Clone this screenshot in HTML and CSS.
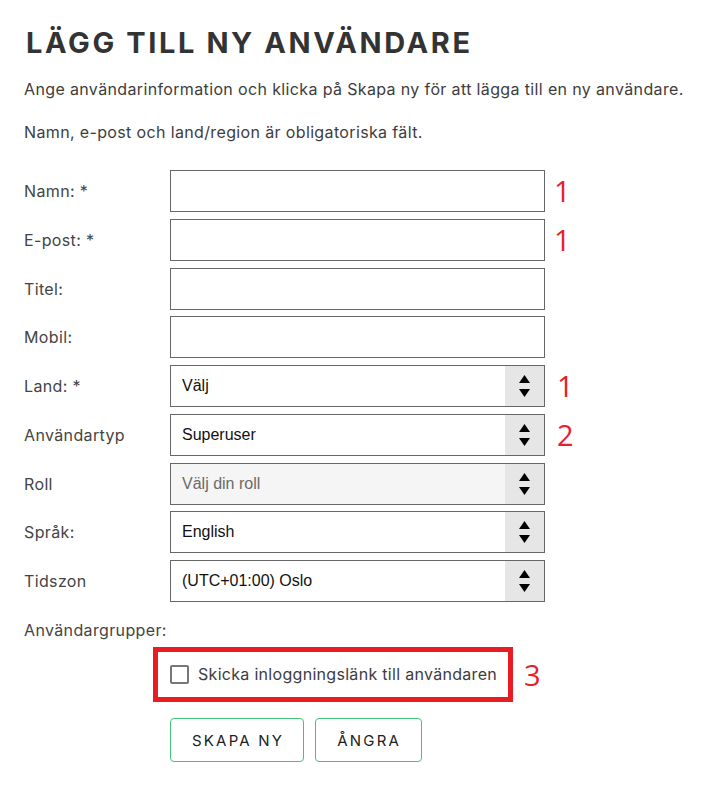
FILE: index.html
```html
<!DOCTYPE html>
<html lang="sv">
<head>
<meta charset="utf-8">
<title>Lägg till ny användare</title>
<link rel="stylesheet" href="styles.css">
</head>
<body>
<main class="page">
  <h1 class="title">LÄGG TILL NY ANVÄNDARE</h1>
  <p class="intro">Ange användarinformation och klicka på Skapa ny för att lägga till en ny användare.</p>
  <p class="intro">Namn, e-post och land/region är obligatoriska fält.</p>

  <form class="form">
    <label class="label">Namn: *</label>
    <div class="field"></div>
    <span class="note">1</span>

    <label class="label">E-post: *</label>
    <div class="field"></div>
    <span class="note">1</span>

    <label class="label">Titel:</label>
    <div class="field"></div>
    <span class="note"></span>

    <label class="label">Mobil:</label>
    <div class="field"></div>
    <span class="note"></span>

    <label class="label">Land: *</label>
    <div class="field select"><span class="value">Välj</span><span class="arrows"><svg width="11" height="22" viewBox="0 0 11 22"><polygon points="5.5,0 11,8 0,8"/><polygon points="0,14 11,14 5.5,22"/></svg></span></div>
    <span class="note note-sel">1</span>

    <label class="label">Användartyp</label>
    <div class="field select"><span class="value">Superuser</span><span class="arrows"><svg width="11" height="22" viewBox="0 0 11 22"><polygon points="5.5,0 11,8 0,8"/><polygon points="0,14 11,14 5.5,22"/></svg></span></div>
    <span class="note note-sel">2</span>

    <label class="label">Roll</label>
    <div class="field select disabled"><span class="value">Välj din roll</span><span class="arrows"><svg width="11" height="22" viewBox="0 0 11 22"><polygon points="5.5,0 11,8 0,8"/><polygon points="0,14 11,14 5.5,22"/></svg></span></div>
    <span class="note"></span>

    <label class="label">Språk:</label>
    <div class="field select"><span class="value">English</span><span class="arrows"><svg width="11" height="22" viewBox="0 0 11 22"><polygon points="5.5,0 11,8 0,8"/><polygon points="0,14 11,14 5.5,22"/></svg></span></div>
    <span class="note"></span>

    <label class="label">Tidszon</label>
    <div class="field select"><span class="value">(UTC+01:00) Oslo</span><span class="arrows"><svg width="11" height="22" viewBox="0 0 11 22"><polygon points="5.5,0 11,8 0,8"/><polygon points="0,14 11,14 5.5,22"/></svg></span></div>
    <span class="note"></span>
  </form>

  <div class="groups">Användargrupper:</div>

  <div class="send-row">
    <label class="send-box"><span class="checkbox"></span><span class="send-text">Skicka inloggningslänk till användaren</span></label>
    <span class="note note-3">3</span>
  </div>

  <div class="buttons">
    <button class="btn" type="button">SKAPA NY</button>
    <button class="btn btn-narrow" type="button">ÅNGRA</button>
  </div>
</main>
</body>
</html>
```
FILE: styles.css
```css
* { box-sizing: border-box; }

body {
  margin: 0;
  background: #fff;
  color: #3a3a3a;
  font-family: Inter, "Open Sans", sans-serif;
}

.page {
  padding: 0 0 0 24px;
}

.title {
  margin: 25px 0 17px 2px;
  font-size: 29px;
  line-height: 35px;
  font-weight: 700;
  letter-spacing: 2.6px;
  color: #333;
}

.intro {
  margin: 0 0 19px;
  font-size: 16px;
  line-height: 24px;
  letter-spacing: 0.36px;
  white-space: nowrap;
  color: #3d3d3d;
}

.form {
  margin-top: 26px;
  display: grid;
  grid-template-columns: 146px 375px auto;
  grid-auto-rows: 42px;
  row-gap: 6.75px;
  align-items: center;
}

.label {
  font-size: 16px;
  line-height: 24px;
  letter-spacing: 0.36px;
  color: #444;
}

.field {
  height: 42px;
  border: 1px solid #676767;
  background: #fff;
}

.select {
  display: flex;
  align-items: stretch;
  font-family: "Liberation Sans", Arial, sans-serif;
  font-size: 16px;
  color: #111;
}

.select .value {
  flex: 1;
  display: flex;
  align-items: center;
  padding-left: 11px;
}

.select.disabled {
  background: #f5f5f5;
  color: #6a6a6a;
}

.arrows {
  width: 39px;
  background: #e6e6e6;
  display: flex;
  align-items: center;
  justify-content: center;
}

.arrows svg {
  display: block;
  fill: #000;
}

.note {
  padding-left: 9px;
  font-family: "Open Sans", sans-serif;
  font-size: 29px;
  line-height: 40px;
  color: #e8202a;
}

.note-sel {
  padding-left: 12px;
}

.groups {
  margin-top: 16px;
  font-size: 16px;
  line-height: 24px;
  letter-spacing: 0.36px;
  color: #444;
}

.send-row {
  margin: 5px 0 0 129px;
  display: flex;
  align-items: center;
}

.send-box {
  display: flex;
  align-items: center;
  gap: 9px;
  padding: 13px 11px 13px 12px;
  border: 5px solid #e91c24;
}

.checkbox {
  width: 19px;
  height: 19px;
  border: 2px solid #777;
  border-radius: 2px;
  background: #fff;
}

.send-text {
  font-size: 16px;
  line-height: 19px;
  letter-spacing: 0.3px;
  color: #3d3d3d;
}

.note-3 {
  padding-left: 11px;
}

.buttons {
  margin: 16px 0 0 146px;
  display: flex;
  gap: 11px;
}

.btn {
  height: 44px;
  padding: 0 19px 0 21px;
  border: 1px solid #41c47a;
  border-radius: 4px;
  background: #fff;
  font-family: Inter, sans-serif;
  font-size: 15px;
  letter-spacing: 2.2px;
  color: #222;
  cursor: pointer;
}

.btn-narrow {
  padding: 0 20px 0 21px;
}
```
